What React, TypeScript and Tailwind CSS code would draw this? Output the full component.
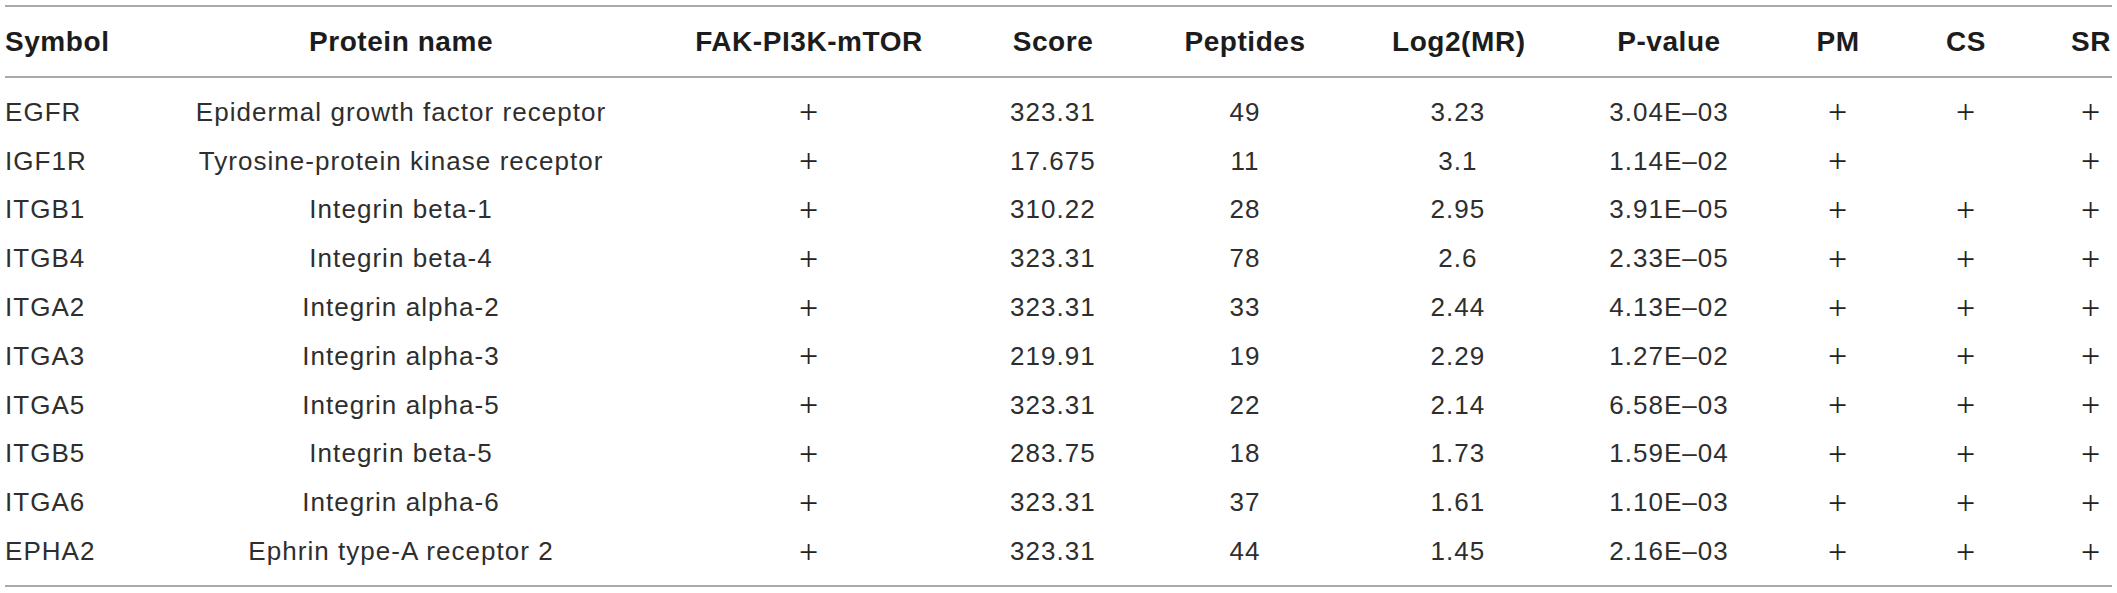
import React from 'react';

type Row = {
  symbol: string;
  name: string;
  fak: boolean;
  score: string;
  peptides: string;
  log2: string;
  pValue: string;
  pm: boolean;
  cs: boolean;
  sr: boolean;
};

const rows: Row[] = [
  { symbol: 'EGFR', name: 'Epidermal growth factor receptor', fak: true, score: '323.31', peptides: '49', log2: '3.23', pValue: '3.04E\u201303', pm: true, cs: true, sr: true },
  { symbol: 'IGF1R', name: 'Tyrosine-protein kinase receptor', fak: true, score: '17.675', peptides: '11', log2: '3.1', pValue: '1.14E\u201302', pm: true, cs: false, sr: true },
  { symbol: 'ITGB1', name: 'Integrin beta-1', fak: true, score: '310.22', peptides: '28', log2: '2.95', pValue: '3.91E\u201305', pm: true, cs: true, sr: true },
  { symbol: 'ITGB4', name: 'Integrin beta-4', fak: true, score: '323.31', peptides: '78', log2: '2.6', pValue: '2.33E\u201305', pm: true, cs: true, sr: true },
  { symbol: 'ITGA2', name: 'Integrin alpha-2', fak: true, score: '323.31', peptides: '33', log2: '2.44', pValue: '4.13E\u201302', pm: true, cs: true, sr: true },
  { symbol: 'ITGA3', name: 'Integrin alpha-3', fak: true, score: '219.91', peptides: '19', log2: '2.29', pValue: '1.27E\u201302', pm: true, cs: true, sr: true },
  { symbol: 'ITGA5', name: 'Integrin alpha-5', fak: true, score: '323.31', peptides: '22', log2: '2.14', pValue: '6.58E\u201303', pm: true, cs: true, sr: true },
  { symbol: 'ITGB5', name: 'Integrin beta-5', fak: true, score: '283.75', peptides: '18', log2: '1.73', pValue: '1.59E\u201304', pm: true, cs: true, sr: true },
  { symbol: 'ITGA6', name: 'Integrin alpha-6', fak: true, score: '323.31', peptides: '37', log2: '1.61', pValue: '1.10E\u201303', pm: true, cs: true, sr: true },
  { symbol: 'EPHA2', name: 'Ephrin type-A receptor 2', fak: true, score: '323.31', peptides: '44', log2: '1.45', pValue: '2.16E\u201303', pm: true, cs: true, sr: true },
];

const headers = ['Symbol', 'Protein name', 'FAK-PI3K-mTOR', 'Score', 'Peptides', 'Log2(MR)', 'P-value', 'PM', 'CS', 'SR'];

// column widths tuned so each centred column lands where the reference has it
const grid =
  'grid grid-cols-[187px_418px_398px_90px_294px_132px_290px_48px_208px_42px] items-center';

function Plus({ on }: { on: boolean }) {
  if (!on) return <span />;
  return (
    <span className="text-center font-['Liberation_Serif',serif] text-[34px] leading-none font-normal text-[#222]">
      +
    </span>
  );
}

export default function App() {
  return (
    <div className="min-h-screen bg-white px-[5px] pt-[5px] font-['Liberation_Sans',Arial,sans-serif]">
      <div className="border-y-2 border-[#a9a9a9]">
        <div className={`${grid} h-[71px] border-b-2 border-[#a9a9a9] text-[28px] font-bold tracking-[0.02em] text-[#1c1c1c]`}>
          {headers.map((h, i) => (
            <div key={h} className={`whitespace-nowrap ${i === 0 ? 'text-left' : 'text-center'}`}>
              {h}
            </div>
          ))}
        </div>

        <div className="pt-[10px] pb-[9px] text-[26px] tracking-[0.04em] text-[#2e2e2e]">
          {rows.map((r) => (
            <div key={r.symbol} className={`${grid} h-[48.8px] whitespace-nowrap`}>
              <div className="text-left">{r.symbol}</div>
              <div className="text-center">{r.name}</div>
              <Plus on={r.fak} />
              <div className="text-center">{r.score}</div>
              <div className="text-center">{r.peptides}</div>
              <div className="text-center">{r.log2}</div>
              <div className="text-center">{r.pValue}</div>
              <Plus on={r.pm} />
              <Plus on={r.cs} />
              <Plus on={r.sr} />
            </div>
          ))}
        </div>
      </div>
    </div>
  );
}
